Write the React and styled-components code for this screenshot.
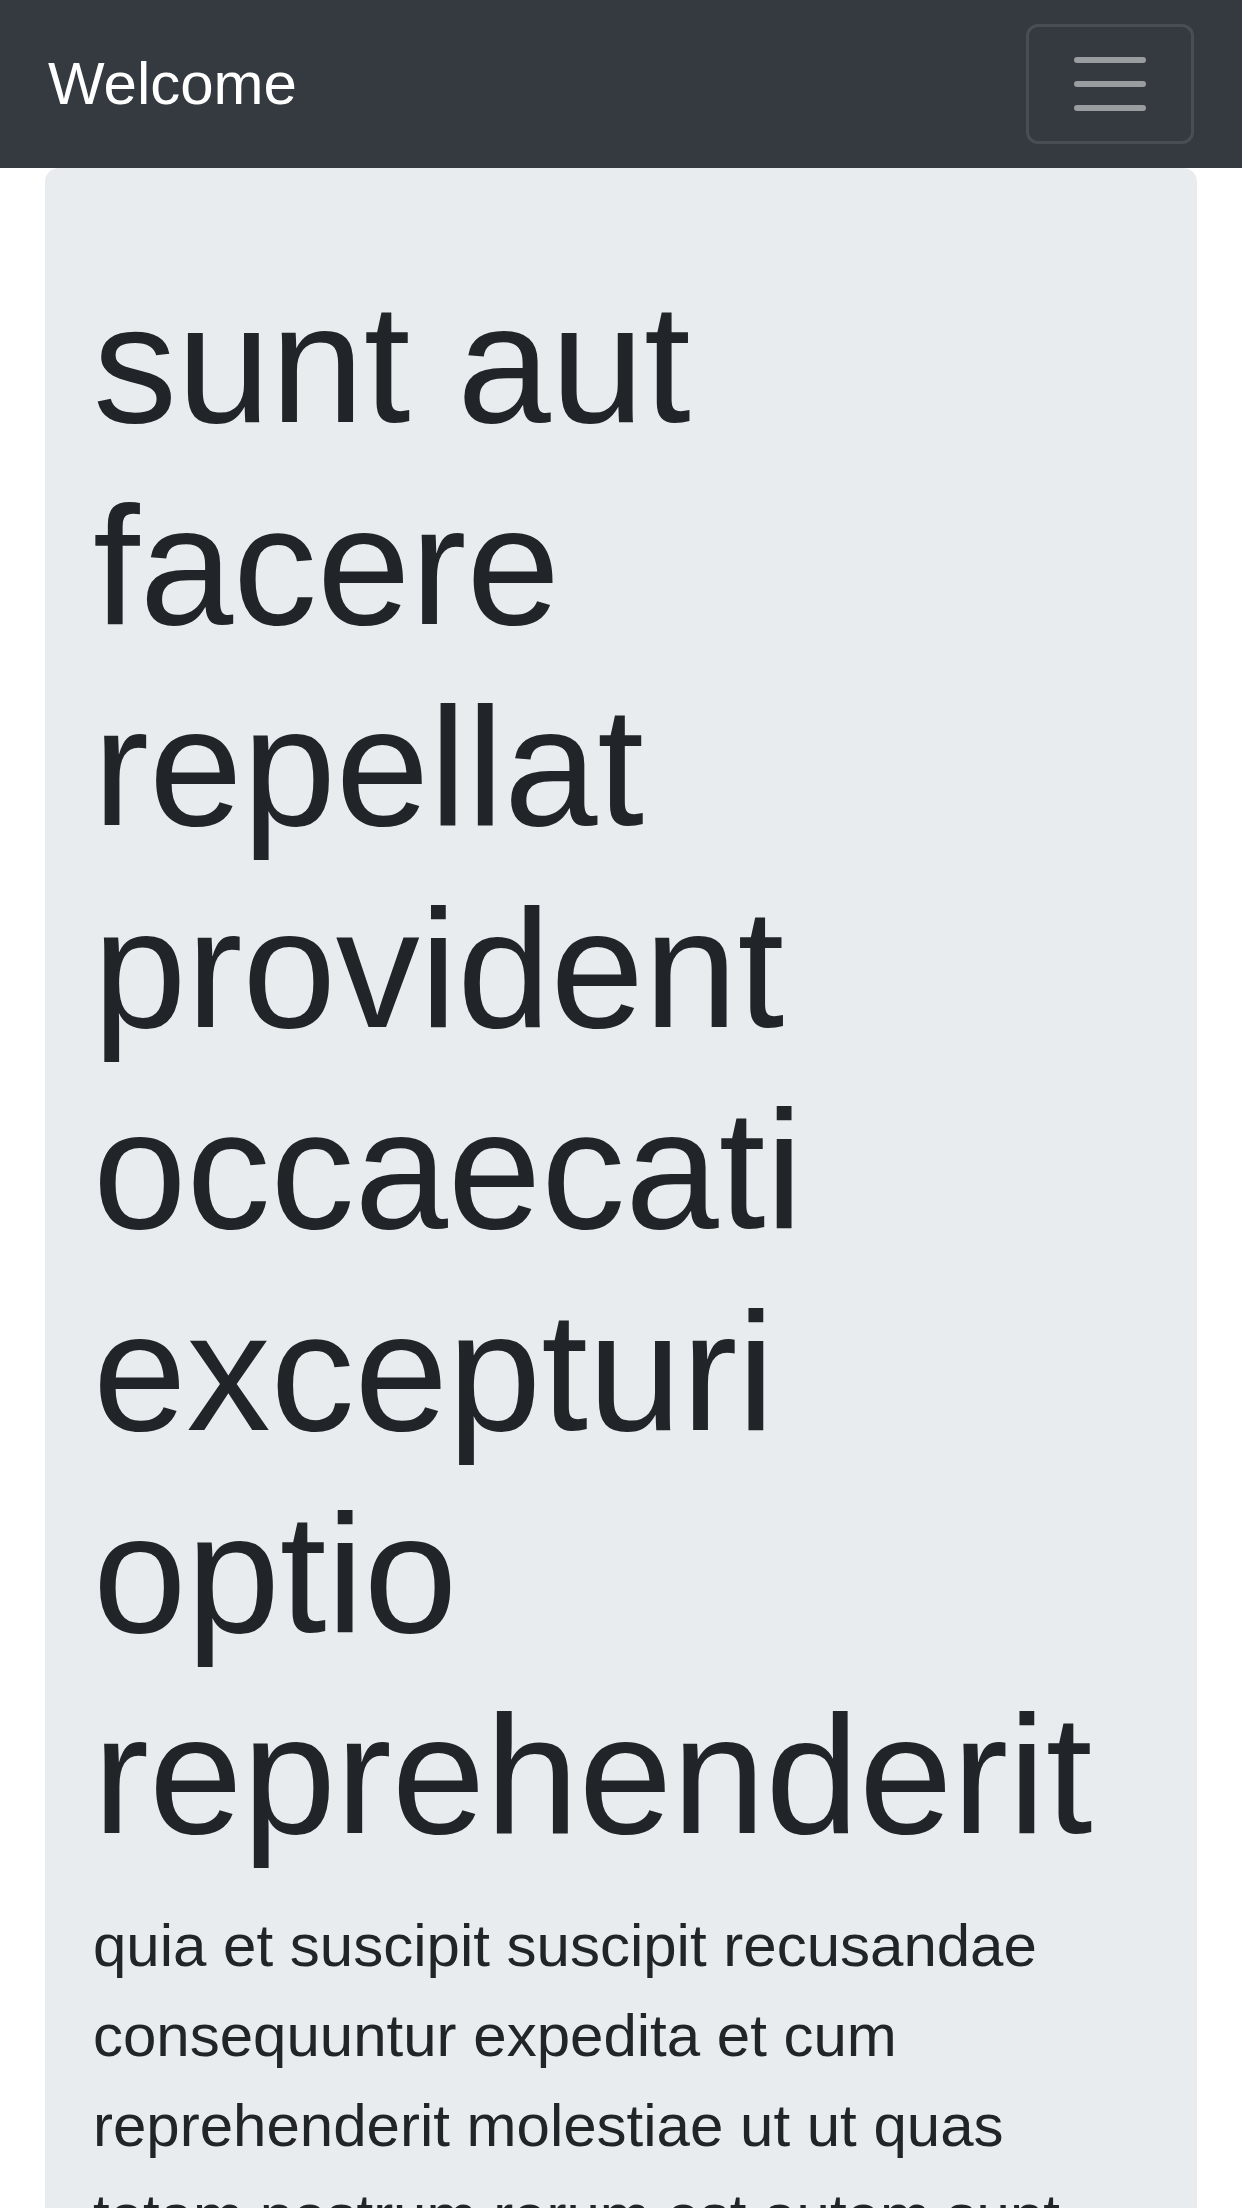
import React from 'react'
import styled, { createGlobalStyle } from 'styled-components'

const GlobalStyle = createGlobalStyle`
  html, body {
    margin: 0;
    padding: 0;
    background: #ffffff;
  }
  body {
    font-family: "Liberation Sans", Arial, sans-serif;
    font-size: 48px;
    line-height: 1.5;
    color: #212529;
  }
  * {
    box-sizing: border-box;
  }
`

const Navbar = styled.nav`
  display: flex;
  align-items: center;
  justify-content: space-between;
  padding: 24px 48px;
  background-color: #343a40;
`

const Brand = styled.a`
  display: inline-block;
  padding: 15px 0;
  font-size: 60px;
  line-height: 1.5;
  color: #ffffff;
  text-decoration: none;
  white-space: nowrap;
`

const Toggler = styled.button`
  display: flex;
  align-items: center;
  justify-content: center;
  padding: 12px 36px;
  font-size: 60px;
  line-height: 1;
  background: transparent;
  border: 3px solid rgba(255, 255, 255, 0.1);
  border-radius: 12px;
  cursor: pointer;
`

const TogglerIcon = styled.svg`
  display: block;
  width: 90px;
  height: 90px;
`

const Container = styled.main`
  padding: 0 45px;
`

const Jumbotron = styled.section`
  padding: 96px 48px;
  margin-bottom: 96px;
  background-color: #e9ecef;
  border-radius: 14px;
`

const Heading = styled.h1`
  margin: 0 0 24px;
  font-size: 168px;
  font-weight: 300;
  line-height: 1.2;
`

const Lead = styled.p`
  margin: 0 0 48px;
  font-size: 60px;
  font-weight: 300;
  line-height: 1.5;
`

const post = {
  title: 'sunt aut facere repellat provident occaecati excepturi optio reprehenderit',
  body: 'quia et suscipit suscipit recusandae consequuntur expedita et cum reprehenderit molestiae ut ut quas totam nostrum rerum est autem sunt rem eveniet architecto'
}

const App = () => {
  return (
    <>
      <GlobalStyle />
      <Navbar>
        <Brand href="#">Welcome</Brand>
        <Toggler aria-label="Toggle navigation">
          <TogglerIcon viewBox="0 0 30 30">
            <path
              d="M4 7h22M4 15h22M4 23h22"
              stroke="rgba(255,255,255,0.5)"
              strokeWidth="2"
              strokeLinecap="round"
              strokeMiterlimit="10"
            />
          </TogglerIcon>
        </Toggler>
      </Navbar>
      <Container>
        <Jumbotron>
          <Heading>{post.title}</Heading>
          <Lead>{post.body}</Lead>
        </Jumbotron>
      </Container>
    </>
  )
}

export default App
